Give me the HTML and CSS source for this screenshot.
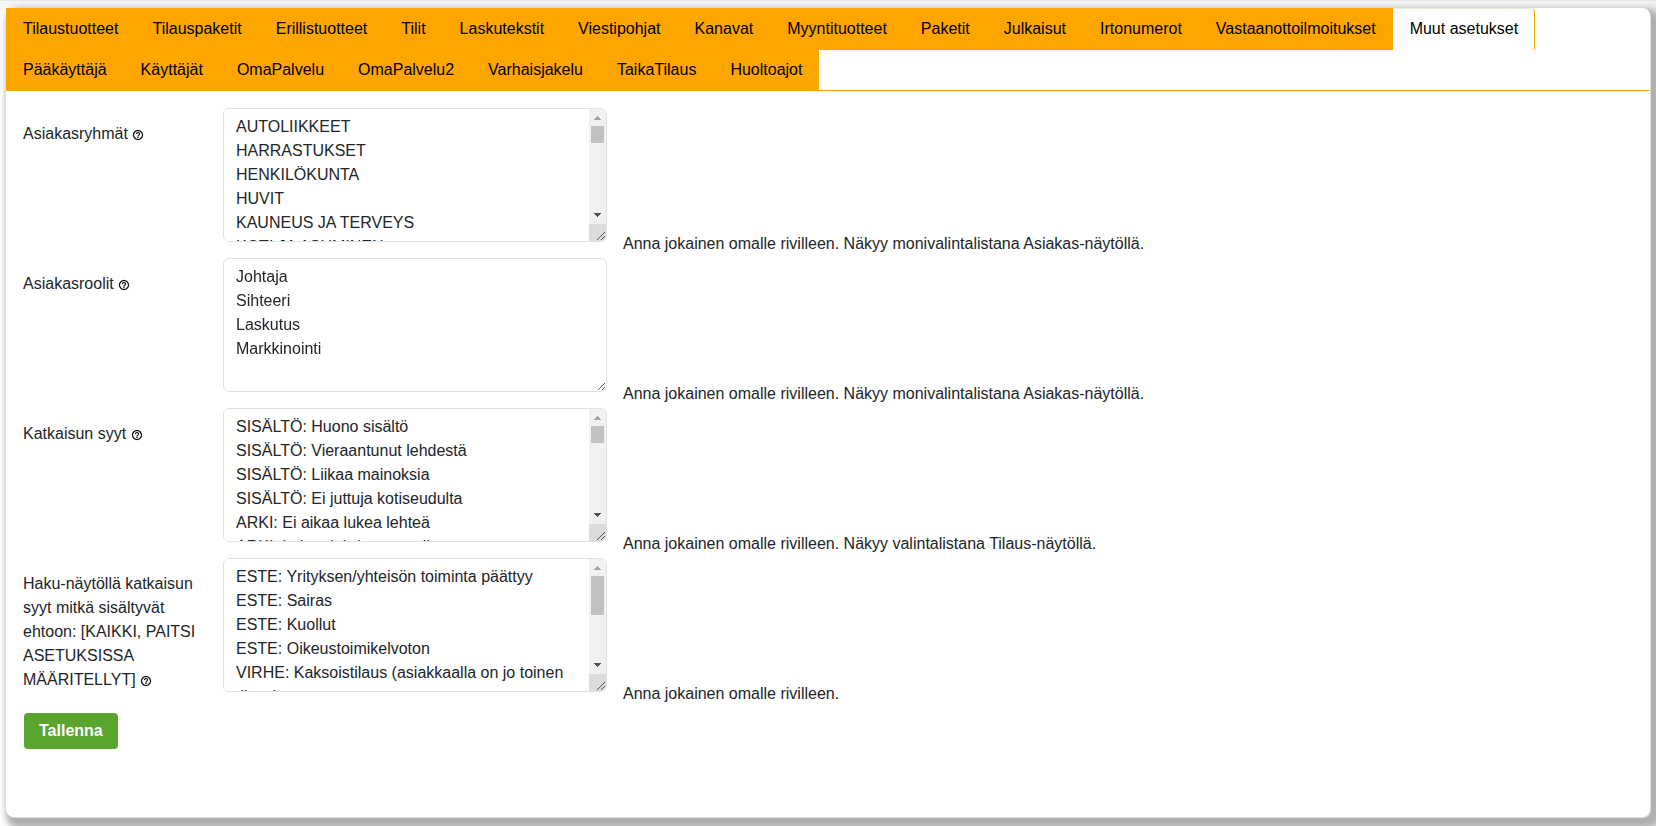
FILE: index.html
```html
<!DOCTYPE html>
<html lang="fi">
<head>
<meta charset="utf-8">
<title>Muut asetukset</title>
<link rel="stylesheet" href="styles.css">
</head>
<body>
<svg class="sprite" aria-hidden="true">
  <symbol id="help" viewBox="0 0 24 24"><path d="M11 18h2v-2h-2v2zm1-16C6.480 2 2 6.480 2 12s4.480 10 10 10 10-4.480 10-10S17.520 2 12 2zm0 18c-4.410 0-8-3.590-8-8s3.590-8 8-8 8 3.590 8 8-3.590 8-8 8zm0-14c-2.210 0-4 1.790-4 4h2c0-1.100.9-2 2-2s2 .9 2 2c0 2-3 1.750-3 5h2c0-2.250 3-2.500 3-5 0-2.210-1.790-4-4-4z"/></symbol>
  <symbol id="bar" viewBox="0 0 17 132">
    <path fill="#f1f1f1" d="M0 0h17v115H0z"/>
    <path fill="#dcdcdc" d="M0 115h17v17H0z"/>
    <path fill="#a3a3a3" d="M5 11h7v-1h-1v-1h-1v-1H9V7H8v1H7v1H6v1H5z"/>
    <path fill="#505050" d="M5 104h7v1h-1v1h-1v1H9v1H8v-1H7v-1H6v-1H5z"/>
    <path fill="none" stroke="#505050" d="M8 131l8-8M12 131l4-4"/>
  </symbol>
</svg>
<main class="card">
  <nav class="tabs">
    <a class="tab" href="#">Tilaustuotteet</a>
    <a class="tab" href="#">Tilauspaketit</a>
    <a class="tab" href="#">Erillistuotteet</a>
    <a class="tab" href="#">Tilit</a>
    <a class="tab" href="#">Laskutekstit</a>
    <a class="tab" href="#">Viestipohjat</a>
    <a class="tab" href="#">Kanavat</a>
    <a class="tab" href="#">Myyntituotteet</a>
    <a class="tab" href="#">Paketit</a>
    <a class="tab" href="#">Julkaisut</a>
    <a class="tab" href="#">Irtonumerot</a>
    <a class="tab" href="#">Vastaanottoilmoitukset</a>
    <a class="tab active" href="#" aria-current="page">Muut asetukset</a>
    <a class="tab" href="#">Pääkäyttäjä</a>
    <a class="tab" href="#">Käyttäjät</a>
    <a class="tab" href="#">OmaPalvelu</a>
    <a class="tab" href="#">OmaPalvelu2</a>
    <a class="tab" href="#">Varhaisjakelu</a>
    <a class="tab" href="#">TaikaTilaus</a>
    <a class="tab" href="#">Huoltoajot</a>
  </nav>
  <form class="settings">
    <div class="row">
      <label class="label" for="groups">Asiakasryhmät <svg class="help"><use href="#help"/></svg></label>
      <div class="box">
        <textarea class="field scrolls" id="groups">AUTOLIIKKEET
HARRASTUKSET
HENKILÖKUNTA
HUVIT
KAUNEUS JA TERVEYS
KOTI JA ASUMINEN</textarea>
        <svg class="bar" aria-hidden="true"><use href="#bar"/><path fill="#c1c1c1" d="M2 17h13v17H2z"/></svg>
      </div>
      <p class="hint">Anna jokainen omalle rivilleen. Näkyy monivalintalistana Asiakas-näytöllä.</p>
    </div>
    <div class="row">
      <label class="label" for="roles">Asiakasroolit <svg class="help"><use href="#help"/></svg></label>
      <div class="box">
        <textarea class="field" id="roles">Johtaja
Sihteeri
Laskutus
Markkinointi</textarea>
      </div>
      <p class="hint">Anna jokainen omalle rivilleen. Näkyy monivalintalistana Asiakas-näytöllä.</p>
    </div>
    <div class="row">
      <label class="label" for="reasons">Katkaisun syyt <svg class="help"><use href="#help"/></svg></label>
      <div class="box">
        <textarea class="field scrolls" id="reasons">SISÄLTÖ: Huono sisältö
SISÄLTÖ: Vieraantunut lehdestä
SISÄLTÖ: Liikaa mainoksia
SISÄLTÖ: Ei juttuja kotiseudulta
ARKI: Ei aikaa lukea lehteä
ARKI: Lukee lehden muualla</textarea>
        <svg class="bar" aria-hidden="true"><use href="#bar"/><path fill="#c1c1c1" d="M2 17h13v17H2z"/></svg>
      </div>
      <p class="hint">Anna jokainen omalle rivilleen. Näkyy valintalistana Tilaus-näytöllä.</p>
    </div>
    <div class="row">
      <label class="label" for="search">Haku-näytöllä katkaisun syyt mitkä sisältyvät ehtoon: [KAIKKI, PAITSI ASETUKSISSA MÄÄRITELLYT] <svg class="help"><use href="#help"/></svg></label>
      <div class="box">
        <textarea class="field scrolls" id="search">ESTE: Yrityksen/yhteisön toiminta päättyy
ESTE: Sairas
ESTE: Kuollut
ESTE: Oikeustoimikelvoton
VIRHE: Kaksoistilaus (asiakkaalla on jo toinen tilaus)</textarea>
        <svg class="bar" aria-hidden="true"><use href="#bar"/><path fill="#c1c1c1" d="M2 17h13v39H2z"/></svg>
      </div>
      <p class="hint">Anna jokainen omalle rivilleen.</p>
    </div>
    <button class="save" type="button">Tallenna</button>
  </form>
</main>
</body>
</html>
```
FILE: styles.css
```css
* { box-sizing: border-box; }

body {
  margin: 0;
  padding: 7px 6px 9px;
  min-height: 100vh;
  display: flex;
  border-top: 1px solid #e5e5e5;
  background: linear-gradient(#f5f5f5 6px, #fff 12px);
  color: #212529;
  font: 16px/24px "Liberation Sans", Arial, sans-serif;
  overflow: hidden;
}

.sprite { display: none; }

.card {
  flex: 1;
  background: #fff;
  border-radius: 8px;
  box-shadow: 1px 1px 0 #ddd, 6px 6px 7px 6px #b0b0b0;
}

.tabs {
  display: flex;
  flex-wrap: wrap;
  border-bottom: 1px solid orange;
}

.tab {
  margin-bottom: -1px;
  padding: 8px 16px;
  border: 1px solid orange;
  background: orange;
  color: #000;
  text-decoration: none;
}

.tab.active {
  border-color: #dff0d8 orange #fff #fff;
  border-radius: 4px 4px 0 0;
  background: #fff;
}

.settings { padding: 17px; }

.row {
  display: flex;
  align-items: flex-start;
  gap: 16px;
  margin-bottom: 16px;
}

.label {
  width: 184px;
  padding-top: 14px;
}

.help {
  width: 12px;
  height: 12px;
  vertical-align: -2px;
  fill: #000;
  stroke: #000;
  stroke-width: 0.3;
}

.box {
  position: relative;
  display: flex;
  width: 384px;
}

.field {
  width: 100%;
  height: 134px;
  padding: 6px 12px;
  border: 1px solid #dee2e6;
  border-radius: 6px;
  background: #fff;
  color: inherit;
  font: inherit;
}

.field.scrolls { padding-right: 29px; }

.bar {
  position: absolute;
  top: 1px;
  right: 1px;
  width: 17px;
  height: 132px;
  border-radius: 0 5px 5px 0;
  pointer-events: none;
}

.hint {
  align-self: flex-end;
  margin: 0 0 -14px;
}

.save {
  margin: 5px 1px 0;
  padding: 6px 15px;
  border: 0;
  border-radius: 4px;
  background: #5aa52d;
  color: #fff;
  font: bold 16px/24px "Liberation Sans", Arial, sans-serif;
}
```
